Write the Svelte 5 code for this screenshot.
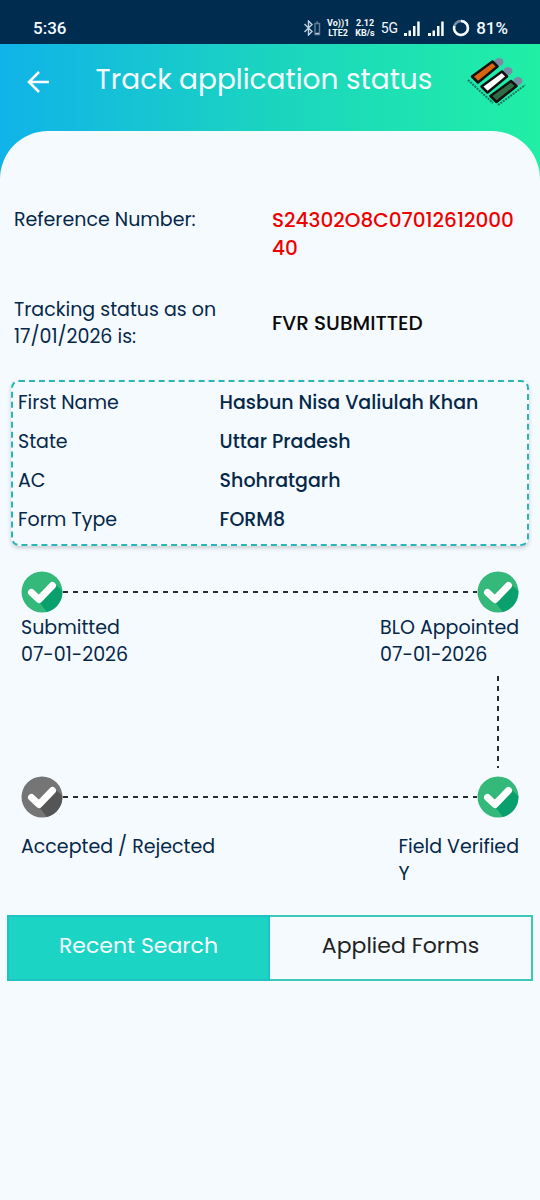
<script>
    const applicant = [
        { label: "First Name", value: "Hasbun Nisa Valiulah Khan" },
        { label: "State", value: "Uttar Pradesh" },
        { label: "AC", value: "Shohratgarh" },
        { label: "Form Type", value: "FORM8" },
    ];

    const tabs = ["Recent Search", "Applied Forms"];
    let activeTab = $state(0);
</script>

{#snippet signal()}
    <svg class="signal" viewBox="0 0 16 15" aria-hidden="true">
        <path d="M0 12h3v3H0zM4.500 9.500h2.500V15H4.500zM9 5h2.500v10H9zM13.200 0.500h2.500V15h-2.500z" />
    </svg>
{/snippet}

{#snippet badge(done)}
    <svg class="badge" class:done viewBox="0 0 42 42" role="img" aria-label={done ? "Done" : "Pending"}>
        <circle class="disc" cx="21" cy="21" r="20.500" />
        <path class="shade" d="M18.500 31.500 34.500 13.500 41.300 20A20.500 20.500 0 0 1 26 40.900z" />
        <path class="tick" d="M10.500 21.500 18 28.500 31.500 14.500" />
    </svg>
{/snippet}

<div class="app">
    <div class="statusbar">
        <span class="time">5:36</span>
        <div class="indicators">
            <svg class="bluetooth" viewBox="0 0 18 16" aria-hidden="true">
                <path d="M1.500 4 9 11.500 5.500 15V1L9 4.500 1.500 12" />
                <path class="dim" d="M12 3.500h4.500v11H12zM13.500 2h1.500" />
                <path d="M12.500 13.500h3.500" />
            </svg>
            <span class="stack">Vo))1<br />LTE2</span>
            <span class="stack">2.12<br />KB/s</span>
            <span class="network">5G</span>
            {@render signal()}
            {@render signal()}
            <svg class="ring" viewBox="0 0 18 18" aria-hidden="true">
                <circle class="dim" cx="9" cy="9" r="7" />
                <path d="M9 2a7 7 0 1 1-6.700 5" />
            </svg>
            <span class="battery">81%</span>
        </div>
    </div>

    <header class="header">
        <button class="back" type="button" aria-label="Back">
            <svg viewBox="0 0 24 24" aria-hidden="true">
                <path d="M23 12H3M13 2 3 12l10 10" />
            </svg>
        </button>
        <h1>Track application status</h1>
        <svg class="logo" viewBox="0 0 60 54" role="img" aria-label="Election Commission of India">
            <g class="caption">
                <path d="M2 26 27 49" />
                <path d="M32 51Q46 41 59 31" />
            </g>
            <g class="heads">
                <ellipse cx="33" cy="8" rx="4.500" ry="4" />
                <ellipse cx="42" cy="17" rx="4.500" ry="4" />
                <ellipse cx="52" cy="27" rx="4.500" ry="4" />
            </g>
            <g class="bars">
                <path class="saffron" d="M6 22.500 26.500 7.500 31.500 12.500 12 28.500z" />
                <path class="white" d="M15.500 32.500 36 17.500 41 22.500 21.500 38.500z" />
                <path class="green" d="M24.500 42 45 27 50.500 32 30.500 48z" />
            </g>
        </svg>
    </header>

    <main class="sheet">
        <dl class="summary">
            <dt>Reference Number:</dt>
            <dd class="reference">S24302O8C0701261200040</dd>
            <dt>Tracking status as on 17/01/2026 is:</dt>
            <dd class="status">FVR SUBMITTED</dd>
        </dl>

        <dl class="card">
            {#each applicant as row (row.label)}
                <dt>{row.label}</dt>
                <dd>{row.value}</dd>
            {/each}
        </dl>

        <section class="steps" aria-label="Application progress">
            <div class="track">
                {@render badge(true)}
                <span class="line"></span>
                {@render badge(true)}
            </div>
            <div class="labels">
                <p>Submitted<br />07-01-2026</p>
                <p>BLO Appointed<br />07-01-2026</p>
            </div>
            <div class="drop"></div>
            <div class="track">
                {@render badge(false)}
                <span class="line"></span>
                {@render badge(true)}
            </div>
            <div class="labels spaced">
                <p>Accepted / Rejected</p>
                <p>Field Verified<br />Y</p>
            </div>
        </section>

        <div class="tabs" role="tablist">
            {#each tabs as tab, i (tab)}
                <button
                    type="button"
                    role="tab"
                    class:active={i === activeTab}
                    aria-selected={i === activeTab}
                    onclick={() => (activeTab = i)}
                >
                    {tab}
                </button>
            {/each}
        </div>
    </main>
</div>

<style>
    :global(body) {
        background: #f5faff;
    }

    .app {
        min-height: 100vh;
        display: flex;
        flex-direction: column;
        background: linear-gradient(90deg, #10b3e8, #1bd4c0 50%, #20efa5);
        color: #052849;
        font-family: Poppins, Inter, "Open Sans", sans-serif;
        font-size: 19px;
        line-height: 27px;
    }

    svg {
        display: block;
        flex-shrink: 0;
        fill: none;
    }

    h1,
    p,
    dl,
    dd {
        margin: 0;
    }

    .statusbar {
        height: 44px;
        padding: 12px 32px 0 33px;
        box-sizing: border-box;
        display: flex;
        justify-content: space-between;
        background: #002c50;
        color: #f5faff;
        font-family: Roboto, sans-serif;
        font-size: 17px;
        font-weight: 500;
        line-height: 32px;
    }

    .time,
    .indicators {
        height: 32px;
    }

    .indicators {
        display: flex;
        align-items: center;
        gap: 6px;
    }

    .bluetooth {
        width: 18px;
        height: 16px;
        stroke: #c3d2e0;
        stroke-width: 1.4;
    }

    .dim {
        opacity: 0.5;
    }

    .stack {
        font-size: 9px;
        font-weight: 700;
        line-height: 10px;
        text-align: center;
    }

    .network {
        font-size: 14px;
        font-weight: 400;
    }

    .signal {
        width: 16px;
        height: 15px;
        margin-right: 2px;
        fill: #f5faff;
    }

    .ring {
        width: 18px;
        height: 18px;
        stroke: #f5faff;
        stroke-width: 2.5;
    }

    .header {
        height: 87px;
        padding: 0 14px 0 26px;
        box-sizing: border-box;
        display: flex;
        align-items: flex-start;
    }

    .back {
        padding: 0;
        margin-top: 26px;
        border: 0;
        background: none;
        cursor: pointer;
    }

    .back svg {
        width: 24px;
        height: 24px;
        stroke: #ffffff;
        stroke-width: 2.5;
    }

    h1 {
        flex: 1;
        padding: 16px 0 0 12px;
        color: #f5faff;
        font-size: 28px;
        font-weight: 400;
        line-height: 40px;
        text-align: center;
    }

    .logo {
        width: 60px;
        height: 54px;
        margin-top: 10px;
    }

    .caption {
        stroke: #1b7560;
        stroke-width: 2;
        stroke-dasharray: 2 1;
    }

    .heads {
        fill: #7b8ba5;
    }

    .bars {
        stroke: #111111;
        stroke-width: 2.5;
        stroke-linejoin: round;
    }

    .saffron {
        fill: #d9640f;
    }

    .white {
        fill: #ffffff;
    }

    .green {
        fill: #2f6e45;
    }

    .sheet {
        flex: 1;
        padding-top: 75px;
        border-radius: 48px 48px 0 0;
        background: #f5faff;
    }

    .summary {
        padding: 0 14px;
        display: grid;
        grid-template-columns: 1fr 1fr;
        gap: 34px 4px;
    }

    dd {
        min-width: 0;
        font-weight: 500;
    }

    .summary dd {
        font-size: 20px;
        line-height: 28px;
    }

    .reference {
        color: #ee0000;
        overflow-wrap: anywhere;
    }

    .status {
        align-self: center;
        color: #0a0a0a;
    }

    .card {
        margin: 30px 11px 0;
        padding: 7px 5px 11px;
        border: 2px dashed #2bb5b5;
        border-radius: 8px;
        box-shadow: 0 2px 4px rgba(0, 0, 0, 0.18);
        display: grid;
        grid-template-columns: 2fr 3fr;
        row-gap: 12px;
    }

    .steps {
        padding: 25px 21px 0;
    }

    .track {
        display: flex;
        align-items: center;
    }

    .badge {
        width: 42px;
        height: 42px;
    }

    .disc {
        fill: #757575;
    }

    .shade {
        fill: #555555;
    }

    .done .disc {
        fill: #35b97b;
    }

    .done .shade {
        fill: #0aa06e;
    }

    .tick {
        stroke: #ffffff;
        stroke-width: 7;
        stroke-linecap: round;
        stroke-linejoin: round;
    }

    .line {
        flex: 1;
        height: 2px;
        background: repeating-linear-gradient(90deg, #2a2d30 0 5px, transparent 5px 10px);
    }

    .labels {
        padding-top: 1px;
        display: flex;
        justify-content: space-between;
    }

    .spaced {
        padding-top: 15px;
    }

    .drop {
        width: 2px;
        height: 92px;
        margin: 8px 20px 8px auto;
        background: repeating-linear-gradient(#2a2d30 0 5px, transparent 5px 10px);
    }

    .tabs {
        margin: 28px 7px 0;
        display: grid;
        grid-template-columns: 1fr 1fr;
    }

    .tabs button {
        padding: 13px 0 17px;
        border: 2px solid #3cc8b4;
        background: #f5faff;
        color: #222222;
        font: inherit;
        font-size: 22px;
        line-height: 32px;
        cursor: pointer;
    }

    .tabs .active {
        border-color: #1ec3c8;
        background: #1bd4c3;
        color: #f5faff;
    }

    /* the active tab owns the divider */
    .tabs .active + button {
        border-left: 0;
    }

    .tabs button:has(+ .active) {
        border-right: 0;
    }
</style>
